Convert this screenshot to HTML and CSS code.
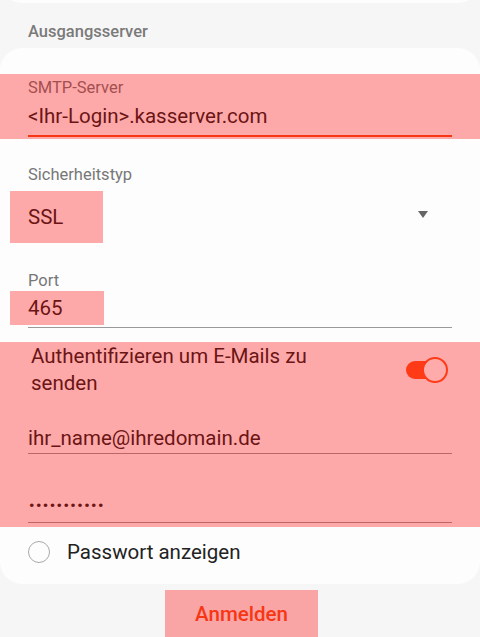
FILE: index.html
```html
<!DOCTYPE html>
<html lang="de">
<head>
  <meta charset="UTF-8">
  <title>Ausgangsserver</title>
  <link rel="stylesheet" href="styles.css">
</head>
<body>

  <div class="top-card"></div>

  <h2 class="section-title">Ausgangsserver</h2>

  <div class="card">
    <div class="field mark">
      <div class="field-label focused">SMTP-Server</div>
      <div class="field-value">&lt;Ihr-Login&gt;.kasserver.com</div>
      <div class="underline active"></div>
    </div>

    <div class="field select-field">
      <div class="field-label">Sicherheitstyp</div>
      <div class="select-row">
        <span class="value-box tall mark">SSL</span>
        <span class="arrow"></span>
      </div>
    </div>

    <div class="field port-field">
      <div class="field-label">Port</div>
      <span class="value-box mark">465</span>
      <div class="underline"></div>
    </div>

    <div class="auth mark">
      <div class="switch-row">
        <span class="switch-text">Authentifizieren um E-Mails zu senden</span>
        <span class="switch on"></span>
      </div>
      <div class="field plain">
        <div class="field-value">ihr_name@ihredomain.de</div>
        <div class="underline"></div>
      </div>
      <div class="field plain password">
        <div class="field-value dots">•••••••••••</div>
        <div class="underline"></div>
      </div>
    </div>

    <label class="check-row">
      <span class="radio"></span>
      <span>Passwort anzeigen</span>
    </label>
  </div>

  <div class="actions">
    <button class="login mark">Anmelden</button>
  </div>

</body>
</html>
```

FILE: styles.css
```css
body {
  margin: 0;
  background: #f6f6f6;
  font-family: Roboto, "Noto Sans", sans-serif;
  color: #222;
  overflow: hidden;
}
.top-card {
  height: 40px;
  margin-top: -37px;
  background: #fdfdfd;
  border-radius: 0 0 22px 22px;
}
.section-title {
  margin: 19px 0 6px;
  padding-left: 28px;
  font-size: 16.5px;
  line-height: 20px;
  font-weight: 500;
  color: #7a7a7a;
}
.card {
  background: #fdfdfd;
  border-radius: 22px;
  padding: 26px 0 19px;
}

/* red annotation overlay */
.mark {
  position: relative;
}
.mark::after {
  content: "";
  position: absolute;
  inset: 0;
  background: rgba(255, 0, 0, 0.33);
  pointer-events: none;
}

.field {
  padding: 4px 28px 2px;
}
.field-label {
  font-size: 16.5px;
  line-height: 20px;
  color: #777;
}
.field-value {
  font-size: 20.5px;
  line-height: 26px;
  margin-top: 5px;
  color: #222;
}
.underline {
  height: 1px;
  background: #9a9a9a;
  margin-top: 6px;
}
.underline.active {
  height: 2px;
  background: #f4511e;
}

.select-field {
  padding-top: 26px;
}
.select-row {
  display: flex;
  align-items: center;
  margin-top: 6px;
}
.value-box {
  display: flex;
  align-items: center;
  margin-left: -18px;
  padding-left: 18px;
  width: 94px;
  box-sizing: border-box;
  height: 34px;
  font-size: 20.5px;
}
.value-box.tall {
  width: 93px;
  height: 52px;
}
.arrow {
  margin-left: auto;
  margin-right: 24px;
  margin-top: -5px;
  border-left: 5px solid transparent;
  border-right: 5px solid transparent;
  border-top: 7px solid #666;
}

.port-field {
  padding-top: 26px;
}
.port-field .underline {
  margin-top: 2px;
}

.auth {
  margin-top: 12px;
  padding: 0 0 4px;
}
.switch-row {
  display: flex;
  align-items: center;
  padding: 1px 32px 0 31px;
}
.switch-text {
  max-width: 300px;
  font-size: 20.5px;
  line-height: 27px;
}
.switch {
  position: relative;
  margin-left: auto;
  width: 42px;
  height: 26px;
}
.switch::before {
  content: "";
  position: absolute;
  left: 0;
  top: 4px;
  width: 34px;
  height: 18px;
  border-radius: 9px;
  background: #ff5722;
}
.switch::after {
  content: "";
  position: absolute;
  right: 0;
  top: 0;
  width: 22px;
  height: 22px;
  border-radius: 50%;
  background: #fff;
  border: 2px solid #ff5722;
}
.plain {
  padding: 29px 28px 0;
}
.plain .field-value {
  margin-top: 0;
  line-height: 24px;
}
.plain .underline {
  margin-top: 3px;
}
.password {
  padding-top: 40px;
}
.dots {
  font-size: 15px;
  font-weight: 700;
  letter-spacing: 1.5px;
  padding-left: 1px;
}
.password .underline {
  margin-top: 4px;
}

.check-row {
  display: flex;
  align-items: center;
  gap: 17px;
  margin-top: 12px;
  padding-left: 28px;
  font-size: 20.5px;
  line-height: 26px;
}
.radio {
  width: 20px;
  height: 20px;
  border: 1.5px solid #aaa;
  border-radius: 50%;
}

.actions {
  display: flex;
  justify-content: center;
  padding: 6px 0 0 3px;
}
.login {
  width: 153px;
  height: 48px;
  border: none;
  background: transparent;
  color: #f4511e;
  font-family: Roboto, sans-serif;
  font-size: 20.5px;
  font-weight: 500;
  padding: 0;
}
```
